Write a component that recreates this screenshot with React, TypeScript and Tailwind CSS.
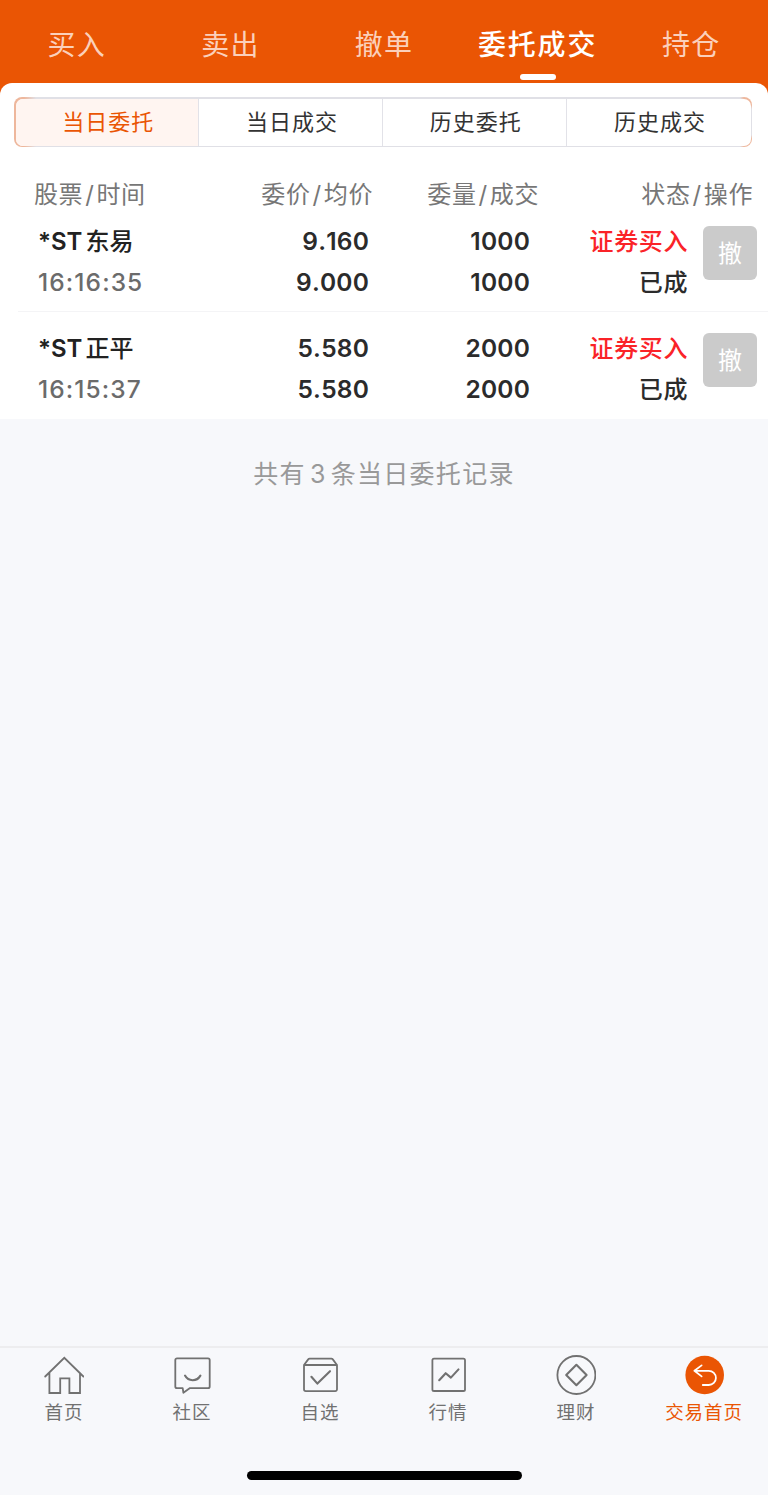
import { ReactNode } from "react";

interface Order {
  name: string;
  time: string;
  price: string;
  average: string;
  amount: string;
  filled: string;
}

interface NavItem {
  label: string;
  icon: ReactNode;
  active?: boolean;
}

const tabs = ["买入", "卖出", "撤单", "委托成交", "持仓"];
const segments = ["当日委托", "当日成交", "历史委托", "历史成交"];

const orders: Order[] = [
  { name: "东易", time: "16:16:35", price: "9.160", average: "9.000", amount: "1000", filled: "1000" },
  { name: "正平", time: "16:15:37", price: "5.580", average: "5.580", amount: "2000", filled: "2000" },
];

function Icon({ children }: { children: ReactNode }) {
  return (
    <svg
      className="size-10"
      viewBox="0 0 40 40"
      fill="none"
      stroke="currentColor"
      strokeWidth="1.8"
      strokeLinecap="round"
      strokeLinejoin="round"
    >
      {children}
    </svg>
  );
}

const navItems: NavItem[] = [
  {
    label: "首页",
    icon: (
      <Icon>
        <path d="M1.2 21.5 20.3 2.8 39.4 21.5M5.4 18v20h10.8V23.4h9.2V38H36V18" strokeLinejoin="miter" />
      </Icon>
    ),
  },
  {
    label: "社区",
    icon: (
      <Icon>
        <path d="M5 3.4h31a1.7 1.7 0 0 1 1.7 1.7v26.3a1.7 1.7 0 0 1-1.7 1.7H18l-6.6 4.7-.7-4.7H5a1.7 1.7 0 0 1-1.7-1.7V5.1A1.7 1.7 0 0 1 5 3.4Z" />
        <path d="M13 20.6c3.4 6.2 11.8 6.2 15.4 0" strokeWidth="2.1" />
      </Icon>
    ),
  },
  {
    label: "自选",
    icon: (
      <Icon>
        <path d="M4 10h33v24.3a1.8 1.8 0 0 1-1.8 1.8H5.8A1.8 1.8 0 0 1 4 34.3ZM4 10l4.2-5.6a1.8 1.8 0 0 1 1.4-.7h21.8a1.8 1.8 0 0 1 1.4.7L37 10" />
        <path d="m11.4 21.8 6 6.8L30 16.2" strokeWidth="2.1" />
      </Icon>
    ),
  },
  {
    label: "行情",
    icon: (
      <Icon>
        <rect x="4.4" y="3.7" width="32.6" height="32.3" rx="1.6" />
        <path d="m11.2 25.2 6.5-7 5.2 4.4 7.6-8.2" strokeWidth="2.1" />
      </Icon>
    ),
  },
  {
    label: "理财",
    icon: (
      <Icon>
        <circle cx="20.4" cy="20" r="19" />
        <path d="M20.4 9.8 30.6 20 20.4 30.2 10.2 20Z" strokeWidth="2.1" />
      </Icon>
    ),
  },
  {
    label: "交易首页",
    active: true,
    icon: (
      <Icon>
        <circle cx="20.7" cy="20" r="19.3" fill="currentColor" stroke="none" />
        <path d="M17.6 10.4 10.4 15.8l7.2 5.6M10.4 15.8h14.4a7.1 7.1 0 0 1 0 14.2h-6" stroke="#fff" />
      </Icon>
    ),
  },
];

function Segments() {
  return (
    <div className="mr-[16px] ml-[14px] mt-[14px] h-[50px] rounded-lg bg-[#e0e0e6] bg-[radial-gradient(circle_at_top_right,#eeb79c_8px,transparent_12px),radial-gradient(circle_at_bottom_right,#eeb79c_8px,transparent_12px),linear-gradient(to_right,#eeb79c_10px,transparent_22px)] p-[1.5px]">
      <div className="grid h-full grid-cols-4 overflow-hidden rounded-[7px] bg-white">
        {segments.map((label, index) => (
          <button
            key={label}
            className={`border-[#e2e2e8] pl-[3px] text-[22px] leading-[47px] tracking-[1px] not-last:border-r-[1.5px] ${
              index === 0 ? "bg-[#fff5f1] text-[#ea5504]" : "text-[#333]"
            }`}
          >
            {label}
          </button>
        ))}
      </div>
    </div>
  );
}

function Heading({ left, right, className }: { left: string; right: string; className: string }) {
  return (
    <div className={`flex gap-[2px] ${className}`}>
      <span>{left}</span>
      <span>/</span>
      <span>{right}</span>
    </div>
  );
}

function OrderRow({ order }: { order: Order }) {
  return (
    <div className="flex h-[106px] pt-4 pl-[38px] text-[24px] leading-[41px] font-semibold text-[#2b2b2b] [font-kerning:none]">
      <div className="w-[160px]">
        <p className="flex gap-[3px] text-[#222]">
          <span>*ST</span>
          <span className="font-medium">{order.name}</span>
        </p>
        <p className="text-[24.5px] font-medium tracking-[1.1px] text-[#6b6b6b]">{order.time}</p>
      </div>
      <div className="w-[171px] text-right text-[24.5px] tracking-[0.2px]">
        <p>{order.price}</p>
        <p>{order.average}</p>
      </div>
      <div className="w-[161px] text-right text-[24.5px] tracking-[0.2px]">
        <p>{order.amount}</p>
        <p>{order.filled}</p>
      </div>
      <div className="w-[158px] text-right font-medium tracking-[0.6px]">
        <p className="text-[#fa2328]">证券买入</p>
        <p>已成</p>
      </div>
      <button className="mt-[5px] ml-[15px] size-[54px] rounded-md bg-[#cbcbcb] text-[24px] font-normal text-white">
        撤
      </button>
    </div>
  );
}

function App() {
  return (
    <div className="flex h-[1495px] w-[768px] flex-col bg-[#f7f8fb] font-[Inter,'Noto_Sans_CJK_SC',sans-serif]">
      <div className="bg-[#ea5504]">
        <div className="grid h-[83px] grid-cols-5">
          {tabs.map((label) => (
            <button
              key={label}
              className={`relative pt-[6px] text-[28px] whitespace-nowrap ${
                label === "委托成交" ? "font-medium tracking-[1.8px] text-white" : "tracking-[1.2px] text-[#fbd0bb]"
              }`}
            >
              {label}
              {label === "委托成交" && (
                <span className="absolute bottom-[3px] left-1/2 h-[6px] w-9 -translate-x-1/2 rounded-full bg-white" />
              )}
            </button>
          ))}
        </div>

        <div className="h-[336px] overflow-hidden rounded-t-xl bg-white">
          <Segments />
          <div className="mt-[37px] flex h-[21px] pl-[34px] text-[24px] leading-[21px] tracking-[0.6px] text-[#777]">
            <Heading left="股票" right="时间" className="w-[160px]" />
            <Heading left="委价" right="均价" className="w-[179px] justify-end" />
            <Heading left="委量" right="成交" className="w-[166px] justify-end" />
            <Heading left="状态" right="操作" className="w-[214px] justify-end" />
          </div>
          <OrderRow order={orders[0]} />
          <div className="ml-[18px] h-px bg-[#f4f4f6]" />
          <OrderRow order={orders[1]} />
        </div>
      </div>

      <p className="mt-9 text-center text-[25px] leading-[38px] tracking-[1.3px] text-[#999]">
        共有<span className="mx-1">3</span>条当日委托记录
      </p>

      <nav className="mt-auto h-[149px] border-t-2 border-[#ededef]">
        <div className="grid grid-cols-6 pt-[7px]">
          {navItems.map((item) => (
            <a
              key={item.label}
              className={`flex flex-col items-center ${item.active ? "text-[#ea5504]" : "text-[#717171]"}`}
            >
              {item.icon}
              <span className="mt-[4px] text-[18.5px] leading-[27px] tracking-[0.9px]">{item.label}</span>
            </a>
          ))}
        </div>
        <div className="mx-auto mt-[45px] h-[9px] w-[275px] rounded-full bg-black" />
      </nav>
    </div>
  );
}

export default App;
